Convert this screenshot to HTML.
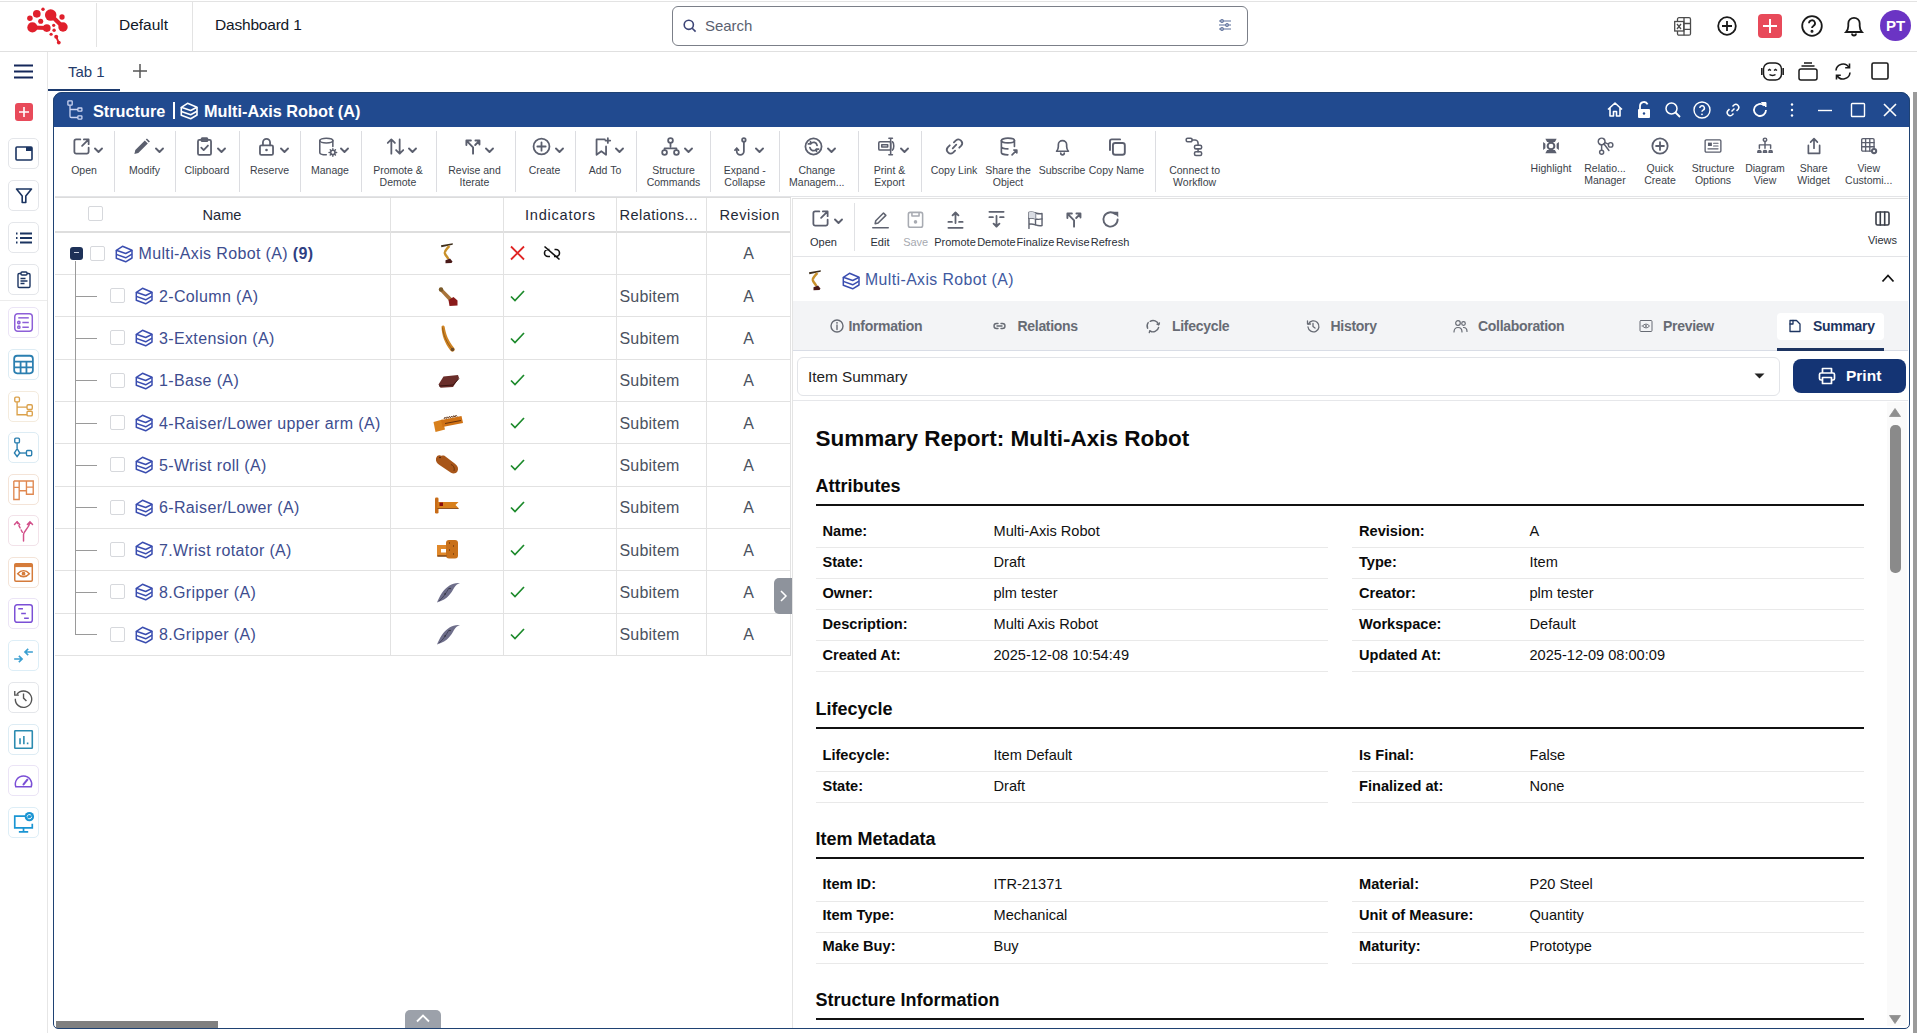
<!DOCTYPE html>
<html><head><meta charset="utf-8">
<style>
*{box-sizing:border-box}
html,body{margin:0;padding:0}
body{width:1917px;height:1033px;overflow:hidden;background:#fff;font-family:"Liberation Sans",sans-serif;position:relative;color:#1f2937}
.a{position:absolute}
.t{position:absolute;white-space:nowrap;line-height:1}
svg{position:absolute;overflow:visible}
.lb{position:absolute;white-space:nowrap;font-size:10.5px;line-height:12px;color:#3b3f4a;text-align:center;width:90px}
.sb{position:absolute;left:8px;width:31px;height:31px;border:1px solid #e6e7eb;border-radius:5px}
</style></head><body>

<div class="a" style="left:0;top:1px;width:1917px;height:1px;background:#e3e3e3"></div>
<div class="a" style="left:0;top:51px;width:1917px;height:1px;background:#e0e0e0"></div>
<div class="a" style="left:96px;top:3px;width:1px;height:44px;background:#e3e3e3"></div>
<div class="a" style="left:192px;top:2px;width:1px;height:49px;background:#e3e3e3"></div>
<svg style="left:0;top:0" width="100" height="52" viewBox="0 0 100 52">
 <g fill="#e0202c">
  <circle cx="43" cy="9.3" r="1.7"/>
  <circle cx="36.8" cy="13.8" r="3.85"/>
  <circle cx="29.9" cy="18.3" r="2.75"/>
  <circle cx="40.7" cy="21.3" r="2.55"/>
  <circle cx="32.4" cy="27.4" r="5.1"/>
  <circle cx="46.8" cy="28.1" r="3.85"/>
  <circle cx="50.7" cy="15.1" r="5.75"/>
  <circle cx="63" cy="27" r="4.7"/>
  <circle cx="62" cy="17" r="2.65"/>
  <circle cx="53.7" cy="25.3" r="1.6"/>
  <circle cx="54.1" cy="30.2" r="1.7"/>
  <circle cx="51.1" cy="34.25" r="1.6"/>
  <circle cx="56.2" cy="36.8" r="2"/>
  <circle cx="58.8" cy="42.6" r="1.9"/>
 </g>
 <g stroke="#e0202c" fill="none">
  <path d="M32.4 27.4L46.8 28.1" stroke-width="4"/>
  <path d="M50.7 15.1L63 27" stroke-width="4.2"/>
  <path d="M56.2 36.8L58.8 42.6" stroke-width="1.9"/>
 </g>
</svg>
<div class="t" style="left:119px;top:17px;font-size:15.5px;color:#111827">Default</div>
<div class="t" style="left:215px;top:17px;font-size:15.5px;color:#111827;letter-spacing:-0.2px">Dashboard 1</div>
<div class="a" style="left:672px;top:6px;width:576px;height:40px;border:1px solid #7b7f88;border-radius:6px"></div>
<svg style="left:683px;top:19px" width="14" height="14" viewBox="0 0 14 14"><circle cx="5.8" cy="5.8" r="4.6" fill="none" stroke="#3d4577" stroke-width="1.6"/><path d="M9.2 9.2 L12.6 12.6" stroke="#3d4577" stroke-width="1.6"/></svg>
<div class="t" style="left:705px;top:18px;font-size:15px;color:#5b6170;letter-spacing:-0.05px">Search</div>
<svg style="left:1218px;top:18px" width="14" height="14" viewBox="0 0 14 14" fill="none" stroke="#5b6e9a" stroke-width="1.2"><path d="M1 3h12M1 7h12M1 11h12"/><circle cx="4" cy="3" r="1.3" fill="#fff"/><circle cx="9" cy="7" r="1.3" fill="#fff"/><circle cx="4" cy="11" r="1.3" fill="#fff"/></svg>
<svg style="left:1674px;top:17px" width="18" height="19" viewBox="0 0 18 19" fill="none" stroke="#4b4b4b" stroke-width="1.3"><rect x="3.5" y="0.7" width="13" height="17.5" rx="1.5"/><path d="M10 0.7v17.5M10 6.5h6.5M10 12.3h6.5"/><rect x="0.7" y="4.5" width="9" height="9.5" fill="#fff"/><path d="M3 7l4 5M7 7l-4 5"/></svg>
<svg style="left:1717px;top:16px" width="20" height="20" viewBox="0 0 20 20" fill="none" stroke="#1a1a1a" stroke-width="1.8"><circle cx="10" cy="10" r="8.8"/><path d="M10 5v10M5 10h10"/></svg>
<div class="a" style="left:1758px;top:14px;width:24px;height:24px;background:#e84a5a;border-radius:4px"></div>
<svg style="left:1758px;top:14px" width="24" height="24" viewBox="0 0 24 24" stroke="#fff" stroke-width="2"><path d="M12 5v14M5 12h14"/></svg>
<svg style="left:1801px;top:15px" width="22" height="22" viewBox="0 0 22 22" fill="none" stroke="#1a1a1a" stroke-width="1.8"><circle cx="11" cy="11" r="9.8"/><path d="M8 8.3a3 3 0 1 1 4.4 2.6c-1 .6-1.4 1.1-1.4 2.2"/><circle cx="11" cy="16.3" r="0.6" fill="#1a1a1a"/></svg>
<svg style="left:1843px;top:14px" width="22" height="24" viewBox="0 0 22 24" fill="none" stroke="#1a1a1a" stroke-width="1.8"><path d="M3 18h16c-1.5-1.6-2.3-3.6-2.3-6V9.5a5.7 5.7 0 0 0-11.4 0V12c0 2.4-.8 4.4-2.3 6z"/><path d="M9 19.5a2 2 0 0 0 4 0"/></svg>
<div class="a" style="left:1880px;top:10px;width:31px;height:31px;border-radius:50%;background:#6b34c4"></div>
<div class="t" style="left:1880px;top:18px;width:31px;text-align:center;font-size:15px;font-weight:bold;color:#fff">PT</div>

<div class="a" style="left:47px;top:52px;width:1px;height:981px;background:#e6e6e6"></div>
<svg style="left:14px;top:64px" width="19" height="15" viewBox="0 0 19 15" stroke="#14275a" stroke-width="2.2"><path d="M0 1.5h19M0 7.5h19M0 13.5h19"/></svg>
<div class="t" style="left:68px;top:64px;font-size:15px;color:#243b6b">Tab 1</div>
<div class="a" style="left:48px;top:89px;width:72px;height:2px;background:#1c3a6e"></div>
<svg style="left:132px;top:63px" width="16" height="16" viewBox="0 0 16 16" stroke="#555" stroke-width="1.5"><path d="M8 1v14M1 8h14"/></svg>
<svg style="left:1761px;top:62px" width="23" height="19" viewBox="0 0 23 19" fill="none" stroke="#1a1a1a" stroke-width="1.5"><rect x="2.5" y="1" width="18" height="17" rx="6"/><path d="M0.8 6v7M22.2 6v7"/><path d="M7 8.5l1.5-1 1.5 1M13 8.5l1.5-1 1.5 1M8.5 12.5c1.5 1.3 4.5 1.3 6 0"/></svg>
<svg style="left:1798px;top:62px" width="20" height="19" viewBox="0 0 20 19" fill="none" stroke="#1a1a1a" stroke-width="1.5"><rect x="1" y="7" width="18" height="11" rx="2"/><path d="M3.5 4h13M6 1h8"/></svg>
<svg style="left:1834px;top:63px" width="18" height="17" viewBox="0 0 18 17" fill="none" stroke="#1a1a1a" stroke-width="1.6"><path d="M2 7.5a7 7 0 0 1 13-3M16 9.5a7 7 0 0 1-13 3"/><path d="M15.5 0.5v4.3h-4.3M2.5 16.5v-4.3h4.3"/></svg>
<svg style="left:1871px;top:62px" width="18" height="18" viewBox="0 0 18 18" fill="none" stroke="#1a1a1a" stroke-width="1.6"><rect x="1" y="1" width="16" height="16" rx="1.5"/></svg>
<div class="a" style="left:15px;top:103px;width:18px;height:18px;background:#e84a5a;border-radius:3px"></div><svg style="left:15px;top:103px" width="18" height="18" viewBox="0 0 18 18" stroke="#fff" stroke-width="1.6"><path d="M9 4v10M4 9h10"/></svg><div class="a" style="left:0;top:300px;width:47px;height:1px;background:#ececec"></div><div class="sb" style="top:138px;border-color:#e4e6ea"></div><svg style="left:14.50px;top:144.50px" width="18.00" height="18.00" viewBox="0 0 18 18"><g fill="none" stroke="#1b3461" stroke-width="1.6"><rect x="1" y="2" width="16" height="13" rx="1"/></g><rect x="11" y="2" width="6" height="4" fill="#1b3461"/></svg><div class="sb" style="top:180px;border-color:#e4e6ea"></div><svg style="left:14.50px;top:186.50px" width="18.00" height="18.00" viewBox="0 0 18 18"><path d="M1.5 2h15l-5.7 7v6.5h-3.6V9z" fill="none" stroke="#1b3461" stroke-width="1.6" stroke-linejoin="round"/></svg><div class="sb" style="top:222px;border-color:#e4e6ea"></div><svg style="left:14.50px;top:228.50px" width="18.00" height="18.00" viewBox="0 0 18 18"><g stroke="#1b3461" stroke-width="1.8"><path d="M5 4.5h12M5 9h12M5 13.5h12"/><path d="M1 4.5h1.5M1 9h1.5M1 13.5h1.5"/></g></svg><div class="sb" style="top:264px;border-color:#e4e6ea"></div><svg style="left:14.50px;top:270.50px" width="18.00" height="18.00" viewBox="0 0 18 18"><g fill="none" stroke="#1b3461" stroke-width="1.4"><rect x="3" y="2.5" width="12" height="14" rx="1.2"/><rect x="6" y="1" width="6" height="3" rx="1" fill="#fff"/><path d="M5.5 7.5h5M5.5 10h7M5.5 12.5h4"/></g></svg><div class="sb" style="top:307px;border-color:#ebe4f6"></div><svg style="left:12.97px;top:311.97px" width="21.06" height="21.06" viewBox="0 0 18 18"><g fill="none" stroke="#8d5fd8" stroke-width="1.26"><rect x="1.5" y="1.5" width="15" height="15" rx="2.5"/><path d="M4.5 5h9"/><circle cx="5" cy="9" r="1"/><circle cx="5" cy="13" r="1"/><path d="M8 9h5.5M8 13h5.5"/></g></svg><div class="sb" style="top:349px;border-color:#ddecf4"></div><svg style="left:12.97px;top:353.97px" width="21.06" height="21.06" viewBox="0 0 18 18"><g fill="none" stroke="#2b7fb0" stroke-width="1.53"><rect x="1" y="1.5" width="16" height="15" rx="2.5"/><path d="M1 6.5h16M1 11.5h16M6.5 6.5v10M11.5 6.5v10"/></g></svg><div class="sb" style="top:391px;border-color:#f4ebdd"></div><svg style="left:12.97px;top:395.97px" width="21.06" height="21.06" viewBox="0 0 18 18"><g fill="none" stroke="#dba14a" stroke-width="1.17"><rect x="1.5" y="1" width="4" height="4" rx="1"/><rect x="12" y="7.5" width="4.5" height="4" rx="1"/><rect x="12" y="13" width="4.5" height="4" rx="1"/><path d="M3.5 5v11h8.5M3.5 9.5h8.5"/></g></svg><div class="sb" style="top:432px;border-color:#ddecf4"></div><svg style="left:12.97px;top:436.97px" width="21.06" height="21.06" viewBox="0 0 18 18"><g fill="none" stroke="#2b7fb0" stroke-width="1.17"><rect x="1.5" y="1" width="4" height="4" rx="1"/><rect x="11.5" y="11.5" width="4.5" height="4.5" rx="1"/><path d="M3.5 5v4.5"/><path d="M3.5 10l2.3 3.7-2.3 3-2.3-3z"/><path d="M5.8 13.7h5.7"/></g></svg><div class="sb" style="top:474px;border-color:#f4e4d8"></div><svg style="left:12.97px;top:478.97px" width="21.06" height="21.06" viewBox="0 0 18 18"><g fill="none" stroke="#e08850" stroke-width="1.17"><path d="M0.7 1.7h16.6v11.3h-5.8V1.7M5.3 1.7v15.8H0.7V1.7M0.7 7.2h4.6M5.3 10h6.2M11.5 7h5.8"/></g></svg><div class="sb" style="top:515px;border-color:#f2e2e9"></div><svg style="left:12.97px;top:519.97px" width="21.06" height="21.06" viewBox="0 0 18 18"><g fill="none" stroke="#d2508a" stroke-width="1.26" stroke-linecap="round"><path d="M9 18v-5.5c0-3 4.5-5 5.5-10.5M12.3 3.8l2.2-2.3 2.2 2.3M1.3 3.8l2.2-2.3 2.2 2.3"/><path d="M8 10.5L3.5 1.8" stroke-dasharray="2.2 2"/></g></svg><div class="sb" style="top:557px;border-color:#f4e4d8"></div><svg style="left:12.97px;top:561.97px" width="21.06" height="21.06" viewBox="0 0 18 18"><g fill="none" stroke="#d57b3a" stroke-width="1.26"><rect x="1.5" y="1.5" width="15" height="15" rx="1"/><path d="M1.5 3h15" stroke-width="2.69"/><path d="M4 10c3-3.5 7-3.5 10 0c-3 3.5-7 3.5-10 0z"/><circle cx="9" cy="10" r="1" fill="#d57b3a"/></g></svg><div class="sb" style="top:598px;border-color:#ebe4f6"></div><svg style="left:12.97px;top:602.97px" width="21.06" height="21.06" viewBox="0 0 18 18"><g fill="none" stroke="#7b4fd6" stroke-width="1.26"><rect x="1.5" y="1.5" width="15" height="15" rx="2"/><path d="M4.5 5h4M7 9h4M9.5 13h4"/></g></svg><div class="sb" style="top:640px;border-color:#ddeef7"></div><svg style="left:12.97px;top:644.97px" width="21.06" height="21.06" viewBox="0 0 18 18"><g fill="none" stroke="#3a9fd1" stroke-width="1.35"><path d="M1 12h6.5M5 9.3L7.8 12 5 14.7"/><path d="M17 6h-6.5M13 3.3L10.2 6 13 8.7"/></g></svg><div class="sb" style="top:682px;border-color:#e4e6ea"></div><svg style="left:12.97px;top:686.97px" width="21.06" height="21.06" viewBox="0 0 18 18"><g fill="none" stroke="#555" stroke-width="1.17"><path d="M3.2 6.5A7 7 0 1 1 2 10"/><path d="M1.5 3.5v3.5h3.5"/><path d="M9 5.5v4l2.5 2.5"/></g></svg><div class="sb" style="top:724px;border-color:#ddecf4"></div><svg style="left:12.97px;top:728.97px" width="21.06" height="21.06" viewBox="0 0 18 18"><g fill="none" stroke="#2b8bb0" stroke-width="1.35"><rect x="1.5" y="1.5" width="15" height="15" rx="0.5"/><path d="M6 13V8M9.3 13V6M12.5 13v-1.5"/></g></svg><div class="sb" style="top:765px;border-color:#ebe4f6"></div><svg style="left:12.97px;top:769.97px" width="21.06" height="21.06" viewBox="0 0 18 18"><g fill="none" stroke="#7b4fd6" stroke-width="1.26"><path d="M2.4 14.4A7 7 0 1 1 15.6 14.4Z"/><path d="M9 12.3l3.3-4" stroke-width="1.79" stroke-linecap="round"/></g></svg><div class="sb" style="top:807px;border-color:#ddeef7"></div><svg style="left:12.97px;top:811.97px" width="21.06" height="21.06" viewBox="0 0 18 18"><g fill="none" stroke="#1a95d3" stroke-width="1.44"><path d="M10.5 3.5H1.5v10h15V10"/><path d="M9 13.5v3M5 17h8"/></g><circle cx="14" cy="4" r="4" fill="#1a95d3"/><path d="M12 4a2 2 0 0 1 3.6-1M16 4a2 2 0 0 1-3.6 1" stroke="#fff" stroke-width="0.81" fill="none"/></svg><div class="a" style="left:53px;top:92px;width:1857px;height:937px;border:1.5px solid #1f4273;border-radius:9px 9px 5px 5px;z-index:5;pointer-events:none"></div><div class="a" style="left:53px;top:92px;width:1857px;height:35px;background:#214a8f;border-radius:9px 9px 0 0"></div><svg style="left:67px;top:100px" width="16" height="20" viewBox="0 0 16 20" fill="none" stroke="#cdd5f2" stroke-width="1.3"><rect x="0.9" y="0.9" width="4.3" height="4.3" rx="0.6"/><rect x="10.9" y="8" width="4" height="3.2" rx="0.5"/><rect x="10.9" y="15.8" width="4" height="3.3" rx="0.5"/><path d="M3 5.2v11c0 .8.5 1.3 1.3 1.3h6.6M3 9.5h7.9"/></svg><div class="t" style="left:93px;top:103px;font-size:16.3px;font-weight:bold;color:#fff">Structure</div><div class="a" style="left:172.5px;top:102px;width:2px;height:17px;background:#fff"></div><svg style="left:180px;top:102px" width="18" height="17" viewBox="0 0 18 17" fill="none" stroke="#fff" stroke-width="1.6" stroke-linejoin="round"><path d="M7.5 1.3L17 5.3 10.7 8.5 1.3 5.3z"/><path d="M1.3 5.3V13.3L10.7 16.8 17 13V5.3"/><path d="M1.3 9.4L10.7 12.8 17 9.2"/></svg><div class="t" style="left:204px;top:103px;font-size:16.3px;font-weight:bold;color:#fff">Multi-Axis Robot (A)</div><svg style="left:1606px;top:101px" width="18" height="18" viewBox="0 0 18 18"><path d="M2 8.5L9 2l7 6.5M4 7v8h3.5v-4.5h3V15H14V7" fill="none" stroke="#fff" stroke-width="1.6" stroke-linejoin="round"/></svg><svg style="left:1635px;top:101px" width="18" height="18" viewBox="0 0 18 18"><path d="M5 8V5a4 4 0 0 1 7.6-1.7" fill="none" stroke="#fff" stroke-width="1.8"/><rect x="3" y="8" width="12" height="9" rx="1" fill="#fff"/><circle cx="9" cy="12.5" r="1.2" fill="#214a8f"/></svg><svg style="left:1664px;top:101px" width="18" height="18" viewBox="0 0 18 18"><circle cx="7.5" cy="7.5" r="5.5" fill="none" stroke="#fff" stroke-width="1.5"/><path d="M11.5 11.5L16 16" stroke="#fff" stroke-width="1.8"/></svg><svg style="left:1693px;top:101px" width="18" height="18" viewBox="0 0 18 18"><circle cx="9" cy="9" r="8" fill="none" stroke="#fff" stroke-width="1.4"/><path d="M6.8 7a2.3 2.3 0 1 1 3.3 2.1c-.8.4-1.1.9-1.1 1.7" fill="none" stroke="#fff" stroke-width="1.5"/><circle cx="9" cy="13.3" r="0.9" fill="#fff"/></svg><svg style="left:1724px;top:101px" width="18" height="18" viewBox="0 0 18 18"><g fill="none" stroke="#fff" stroke-width="1.5"><path d="M7.5 10.5l3-3"/><path d="M8.5 5.5l1.5-1.5a3 3 0 0 1 4.2 4.2l-1.7 1.7"/><path d="M9.5 12.5L8 14a3 3 0 0 1-4.2-4.2l1.7-1.7"/></g></svg><svg style="left:1751px;top:101px" width="18" height="18" viewBox="0 0 18 18"><path d="M15 9a6 6 0 1 1-2-4.5" fill="none" stroke="#fff" stroke-width="1.8"/><path d="M10.5 1.5h4.5v4.5z" fill="#fff" stroke="#fff" stroke-width="1"/></svg><svg style="left:1783px;top:101px" width="18" height="18" viewBox="0 0 18 18"><circle cx="9" cy="3.5" r="1.2" fill="#fff"/><circle cx="9" cy="9" r="1.2" fill="#fff"/><circle cx="9" cy="14.5" r="1.2" fill="#fff"/></svg><svg style="left:1816px;top:101px" width="18" height="18" viewBox="0 0 18 18"><path d="M2 9.5h14" stroke="#fff" stroke-width="1.4"/></svg><svg style="left:1849px;top:101px" width="18" height="18" viewBox="0 0 18 18"><rect x="2.5" y="2.5" width="13" height="13" rx="0.8" fill="none" stroke="#fff" stroke-width="1.4"/></svg><svg style="left:1881px;top:101px" width="18" height="18" viewBox="0 0 18 18"><path d="M3 3l12 12M15 3L3 15" stroke="#fff" stroke-width="1.6"/></svg><svg style="left:71.6px;top:137px" width="19" height="19" viewBox="0 0 16 16"><g fill="none" stroke="#5b5f6e" stroke-width="1.5" stroke-linecap="round" stroke-linejoin="round"><path d="M7 2H3.5A1.5 1.5 0 0 0 2 3.5v9A1.5 1.5 0 0 0 3.5 14h9a1.5 1.5 0 0 0 1.5-1.5V9"/><path d="M10 2h4v4M14 2L8.5 7.5"/></g></svg><svg style="left:94.0px;top:146.5px" width="9" height="7" viewBox="0 0 9 7"><path d="M1 1.5l3.5 3.5 3.5-3.5" fill="none" stroke="#5b5f6e" stroke-width="1.9" stroke-linecap="round" stroke-linejoin="round"/></svg><div class="lb" style="left:39px;top:164px">Open</div><svg style="left:132.1px;top:137px" width="19" height="19" viewBox="0 0 16 16"><path d="M2 14.3l.8-3.3 8-8 2.5 2.5-8 8z" fill="#5b5f6e"/><path d="M11.6 2.2l1-1 2.5 2.5-1 1z" fill="#5b5f6e"/></svg><svg style="left:154.5px;top:146.5px" width="9" height="7" viewBox="0 0 9 7"><path d="M1 1.5l3.5 3.5 3.5-3.5" fill="none" stroke="#5b5f6e" stroke-width="1.9" stroke-linecap="round" stroke-linejoin="round"/></svg><div class="lb" style="left:99.5px;top:164px">Modify</div><svg style="left:194.6px;top:137px" width="19" height="19" viewBox="0 0 16 16"><g fill="none" stroke="#5b5f6e" stroke-width="1.5" stroke-linecap="round" stroke-linejoin="round"><rect x="2.5" y="2.5" width="11" height="12.5" rx="1.2"/><rect x="5.5" y="1" width="5" height="2.5" rx="0.6"/><path d="M5.3 9l2 2 3.6-3.8"/></g></svg><svg style="left:217.0px;top:146.5px" width="9" height="7" viewBox="0 0 9 7"><path d="M1 1.5l3.5 3.5 3.5-3.5" fill="none" stroke="#5b5f6e" stroke-width="1.9" stroke-linecap="round" stroke-linejoin="round"/></svg><div class="lb" style="left:162px;top:164px">Clipboard</div><svg style="left:257.1px;top:137px" width="19" height="19" viewBox="0 0 16 16"><g fill="none" stroke="#5b5f6e" stroke-width="1.5" stroke-linecap="round" stroke-linejoin="round"><rect x="2.5" y="7" width="11" height="8" rx="1.2"/><path d="M5 7V4.5a3 3 0 0 1 6 0V7"/></g><circle cx="8" cy="11" r="1.1" fill="#5b5f6e"/></svg><svg style="left:279.5px;top:146.5px" width="9" height="7" viewBox="0 0 9 7"><path d="M1 1.5l3.5 3.5 3.5-3.5" fill="none" stroke="#5b5f6e" stroke-width="1.9" stroke-linecap="round" stroke-linejoin="round"/></svg><div class="lb" style="left:224.5px;top:164px">Reserve</div><svg style="left:317.6px;top:137px" width="19" height="19" viewBox="0 0 16 16"><g fill="none" stroke="#5b5f6e" stroke-width="1.3" stroke-linecap="round" stroke-linejoin="round"><ellipse cx="7" cy="3" rx="5.5" ry="2"/><path d="M1.5 3v10c0 1.1 2.5 2 5.5 2M12.5 3v5"/></g><g fill="none" stroke="#5b5f6e" stroke-width="1.2" stroke-linecap="round" stroke-linejoin="round"><circle cx="12.5" cy="13" r="1.8"/><path d="M12.5 9.8v1.2M12.5 15v1.2M9.3 13h1.2M14.5 13h1.2M10.3 10.8l.8.8M13.9 14.4l.8.8M10.3 15.2l.8-.8M13.9 11.6l.8-.8"/></g></svg><svg style="left:340.0px;top:146.5px" width="9" height="7" viewBox="0 0 9 7"><path d="M1 1.5l3.5 3.5 3.5-3.5" fill="none" stroke="#5b5f6e" stroke-width="1.9" stroke-linecap="round" stroke-linejoin="round"/></svg><div class="lb" style="left:285px;top:164px">Manage</div><svg style="left:385.6px;top:137px" width="19" height="19" viewBox="0 0 16 16"><g fill="none" stroke="#5b5f6e" stroke-width="1.5" stroke-linecap="round" stroke-linejoin="round"><path d="M4.5 14V2M1.5 5l3-3 3 3"/><path d="M11.5 2v12M8.5 11l3 3 3-3"/></g></svg><svg style="left:408.0px;top:146.5px" width="9" height="7" viewBox="0 0 9 7"><path d="M1 1.5l3.5 3.5 3.5-3.5" fill="none" stroke="#5b5f6e" stroke-width="1.9" stroke-linecap="round" stroke-linejoin="round"/></svg><div class="lb" style="left:353px;top:164px">Promote &<br>Demote</div><svg style="left:462.1px;top:137px" width="19" height="19" viewBox="0 0 16 16"><g fill="none" stroke="#5b5f6e" stroke-width="1.6" stroke-linecap="round" stroke-linejoin="round"><path d="M9.3 14V8.7L3.9 3.2M3.7 6.7V3h3.8M11.1 6.7l3.5-3.5M11.3 3h3.4v3.3"/></g></svg><svg style="left:484.5px;top:146.5px" width="9" height="7" viewBox="0 0 9 7"><path d="M1 1.5l3.5 3.5 3.5-3.5" fill="none" stroke="#5b5f6e" stroke-width="1.9" stroke-linecap="round" stroke-linejoin="round"/></svg><div class="lb" style="left:429.5px;top:164px">Revise and<br>Iterate</div><svg style="left:532.1px;top:137px" width="19" height="19" viewBox="0 0 16 16"><g fill="none" stroke="#5b5f6e" stroke-width="1.5" stroke-linecap="round" stroke-linejoin="round"><circle cx="8" cy="8" r="6.7"/><path d="M8 4.5v7M4.5 8h7"/></g></svg><svg style="left:554.5px;top:146.5px" width="9" height="7" viewBox="0 0 9 7"><path d="M1 1.5l3.5 3.5 3.5-3.5" fill="none" stroke="#5b5f6e" stroke-width="1.9" stroke-linecap="round" stroke-linejoin="round"/></svg><div class="lb" style="left:499.5px;top:164px">Create</div><svg style="left:592.6px;top:137px" width="19" height="19" viewBox="0 0 16 16"><g fill="none" stroke="#5b5f6e" stroke-width="1.5" stroke-linecap="round" stroke-linejoin="round"><path d="M10 2H3v13l4-3 4 3V8"/><path d="M12.5 1v4M10.5 3h4"/></g></svg><svg style="left:615.0px;top:146.5px" width="9" height="7" viewBox="0 0 9 7"><path d="M1 1.5l3.5 3.5 3.5-3.5" fill="none" stroke="#5b5f6e" stroke-width="1.9" stroke-linecap="round" stroke-linejoin="round"/></svg><div class="lb" style="left:560px;top:164px">Add To</div><svg style="left:661.1px;top:137px" width="19" height="19" viewBox="0 0 16 16"><g fill="none" stroke="#5b5f6e" stroke-width="1.5" stroke-linecap="round" stroke-linejoin="round"><circle cx="8" cy="3" r="2"/><circle cx="3" cy="13" r="2"/><circle cx="13" cy="13" r="2"/><path d="M8 5v3M3 11V9.5h10V11"/></g></svg><svg style="left:683.5px;top:146.5px" width="9" height="7" viewBox="0 0 9 7"><path d="M1 1.5l3.5 3.5 3.5-3.5" fill="none" stroke="#5b5f6e" stroke-width="1.9" stroke-linecap="round" stroke-linejoin="round"/></svg><div class="lb" style="left:628.5px;top:164px">Structure<br>Commands</div><svg style="left:732.4px;top:137px" width="19" height="19" viewBox="0 0 16 16"><g fill="none" stroke="#5b5f6e" stroke-width="1.5" stroke-linecap="round" stroke-linejoin="round"><circle cx="10" cy="2.5" r="1.5"/><path d="M10 4v8a3 3 0 0 1-6 0V9.5"/><path d="M2.5 11L4 9.5 5.5 11"/></g></svg><svg style="left:754.8px;top:146.5px" width="9" height="7" viewBox="0 0 9 7"><path d="M1 1.5l3.5 3.5 3.5-3.5" fill="none" stroke="#5b5f6e" stroke-width="1.9" stroke-linecap="round" stroke-linejoin="round"/></svg><div class="lb" style="left:699.8px;top:164px">Expand -<br>Collapse</div><svg style="left:804.4px;top:137px" width="19" height="19" viewBox="0 0 16 16"><g fill="none" stroke="#5b5f6e" stroke-width="1.5" stroke-linecap="round" stroke-linejoin="round"><circle cx="8" cy="8" r="6.8"/><path d="M5 9a3 3 0 0 0 5.2 1.5M11 7a3 3 0 0 0-5.2-1.5"/><path d="M10.5 12v-1.8h1.8M5.5 4v1.8H3.7"/></g></svg><svg style="left:826.8px;top:146.5px" width="9" height="7" viewBox="0 0 9 7"><path d="M1 1.5l3.5 3.5 3.5-3.5" fill="none" stroke="#5b5f6e" stroke-width="1.9" stroke-linecap="round" stroke-linejoin="round"/></svg><div class="lb" style="left:771.8px;top:164px">Change<br>Managem...</div><svg style="left:877.1px;top:137px" width="19" height="19" viewBox="0 0 16 16"><g fill="none" stroke="#5b5f6e" stroke-width="1.3" stroke-linecap="round" stroke-linejoin="round"><rect x="1.5" y="4" width="10" height="7" rx="1"/><path d="M4 6.5h5v2H4z"/><path d="M10 1h3M11.5 1v14M10 15h3M13 4c1.5 1 1.5 6 0 7"/></g></svg><svg style="left:899.5px;top:146.5px" width="9" height="7" viewBox="0 0 9 7"><path d="M1 1.5l3.5 3.5 3.5-3.5" fill="none" stroke="#5b5f6e" stroke-width="1.9" stroke-linecap="round" stroke-linejoin="round"/></svg><div class="lb" style="left:844.5px;top:164px">Print &<br>Export</div><svg style="left:944.5px;top:137px" width="19" height="19" viewBox="0 0 16 16"><g fill="none" stroke="#5b5f6e" stroke-width="1.5" stroke-linecap="round" stroke-linejoin="round"><path d="M6.5 9.5l3-3"/><path d="M7.5 4.5l1.7-1.7a3.2 3.2 0 0 1 4.5 4.5L12 9"/><path d="M8.5 11.5l-1.7 1.7a3.2 3.2 0 0 1-4.5-4.5L4 7"/></g></svg><div class="lb" style="left:909px;top:164px">Copy Link</div><svg style="left:998.5px;top:137px" width="19" height="19" viewBox="0 0 16 16"><g fill="none" stroke="#5b5f6e" stroke-width="1.4" stroke-linecap="round" stroke-linejoin="round"><ellipse cx="7.5" cy="3" rx="5.5" ry="2"/><path d="M2 3v10c0 1.1 2.5 2 5.5 2M13 3v5M2 8c0 1.1 2.5 2 5.5 2"/><path d="M11 15l4-4M12.5 11H15v2.5"/></g></svg><div class="lb" style="left:963px;top:164px">Share the<br>Object</div><svg style="left:1052.5px;top:137px" width="19" height="19" viewBox="0 0 16 16"><g fill="none" stroke="#5b5f6e" stroke-width="1.4" stroke-linecap="round" stroke-linejoin="round"><path d="M3 12h10c-1-1-1.5-2.3-1.5-4V6.5a3.5 3.5 0 0 0-7 0V8c0 1.7-.5 3-1.5 4z"/><path d="M6.5 13.5a1.5 1.5 0 0 0 3 0"/></g></svg><div class="lb" style="left:1017px;top:164px">Subscribe</div><svg style="left:1107.0px;top:137px" width="19" height="19" viewBox="0 0 16 16"><g fill="none" stroke="#5b5f6e" stroke-width="1.6" stroke-linecap="round" stroke-linejoin="round"><rect x="5" y="5" width="10" height="10" rx="2"/><path d="M2.5 11V3.5a1.5 1.5 0 0 1 1.5-1.5H11"/></g></svg><div class="lb" style="left:1071.5px;top:164px">Copy Name</div><svg style="left:1185.1px;top:137px" width="19" height="19" viewBox="0 0 16 16"><g fill="none" stroke="#5b5f6e" stroke-width="1.3" stroke-linecap="round" stroke-linejoin="round"><rect x="1" y="1" width="5" height="3" rx="1.2"/><rect x="8" y="7" width="6" height="3" rx="1.2"/><rect x="8" y="12.5" width="6" height="3" rx="1.2"/><path d="M6 2.5h2.5c1 0 2.5 1 2.5 2.5v2M11 10v2.5"/></g></svg><div class="lb" style="left:1149.6px;top:164px">Connect to<br>Workflow</div><div class="a" style="left:114px;top:131px;width:1px;height:61px;background:#dcdde1"></div><div class="a" style="left:175px;top:131px;width:1px;height:61px;background:#dcdde1"></div><div class="a" style="left:239px;top:131px;width:1px;height:61px;background:#dcdde1"></div><div class="a" style="left:300px;top:131px;width:1px;height:61px;background:#dcdde1"></div><div class="a" style="left:361px;top:131px;width:1px;height:61px;background:#dcdde1"></div><div class="a" style="left:435.5px;top:131px;width:1px;height:61px;background:#dcdde1"></div><div class="a" style="left:514.5px;top:131px;width:1px;height:61px;background:#dcdde1"></div><div class="a" style="left:575px;top:131px;width:1px;height:61px;background:#dcdde1"></div><div class="a" style="left:636px;top:131px;width:1px;height:61px;background:#dcdde1"></div><div class="a" style="left:710px;top:131px;width:1px;height:61px;background:#dcdde1"></div><div class="a" style="left:779px;top:131px;width:1px;height:61px;background:#dcdde1"></div><div class="a" style="left:857.5px;top:131px;width:1px;height:61px;background:#dcdde1"></div><div class="a" style="left:920.5px;top:131px;width:1px;height:61px;background:#dcdde1"></div><div class="a" style="left:1155px;top:131px;width:1px;height:61px;background:#dcdde1"></div><svg style="left:1542px;top:137px" width="18" height="18" viewBox="0 0 16 16"><g fill="#5b5f6e"><path d="M3 1.5h10l-1.5 3h-7z"/><path d="M3 14.5h10l-1.5-3h-7z"/><path d="M1 4.5v7l2-1.5v-4z"/><path d="M15 4.5v7l-2-1.5v-4z"/></g><g fill="none" stroke="#5b5f6e" stroke-width="1.8" stroke-linecap="round" stroke-linejoin="round"><circle cx="8" cy="8" r="3"/></g></svg><div class="lb" style="left:1506px;top:162px">Highlight</div><svg style="left:1596px;top:137px" width="18" height="18" viewBox="0 0 16 16"><g fill="none" stroke="#5b5f6e" stroke-width="1.3" stroke-linecap="round" stroke-linejoin="round"><circle cx="5" cy="4" r="3"/><circle cx="13" cy="7" r="2"/><circle cx="5" cy="13.5" r="1.8"/><path d="M8 5l3 1.3M5 7v4.7M7 6l4.5 6"/></g></svg><div class="lb" style="left:1560px;top:162px">Relatio...<br>Manager</div><svg style="left:1651px;top:137px" width="18" height="18" viewBox="0 0 16 16"><g fill="none" stroke="#5b5f6e" stroke-width="1.6" stroke-linecap="round" stroke-linejoin="round"><circle cx="8" cy="8" r="6.8"/><path d="M8 4.5v7M4.5 8h7"/></g></svg><div class="lb" style="left:1615px;top:162px">Quick<br>Create</div><svg style="left:1704px;top:137px" width="18" height="18" viewBox="0 0 16 16"><g fill="none" stroke="#5b5f6e" stroke-width="1.2" stroke-linecap="round" stroke-linejoin="round"><rect x="1" y="2.5" width="14" height="11" rx="1"/></g><rect x="3.5" y="5" width="3.5" height="3" fill="#5b5f6e"/><g fill="none" stroke="#5b5f6e" stroke-width="1" stroke-linecap="round" stroke-linejoin="round"><path d="M8.5 5.5h4M8.5 8h4M3.5 10.5h9"/></g></svg><div class="lb" style="left:1668px;top:162px">Structure<br>Options</div><svg style="left:1756px;top:137px" width="18" height="18" viewBox="0 0 16 16"><g fill="none" stroke="#5b5f6e" stroke-width="1.3" stroke-linecap="round" stroke-linejoin="round"><circle cx="8" cy="2.5" r="1.5"/><path d="M8 4v3M3 10V7h10v3M8 7v3"/><path d="M1.5 13.5a1.5 1.5 0 0 1 3 0zM6.5 13.5a1.5 1.5 0 0 1 3 0zM11.5 13.5a1.5 1.5 0 0 1 3 0z"/></g></svg><div class="lb" style="left:1720px;top:162px">Diagram<br>View</div><svg style="left:1804.7px;top:137px" width="18" height="18" viewBox="0 0 16 16"><g fill="none" stroke="#5b5f6e" stroke-width="1.5" stroke-linecap="round" stroke-linejoin="round"><path d="M8 10V1.5M5 4.5l3-3 3 3"/><path d="M3 7.5v7h10v-7"/></g></svg><div class="lb" style="left:1768.7px;top:162px">Share<br>Widget</div><svg style="left:1859.7px;top:137px" width="18" height="18" viewBox="0 0 16 16"><g fill="none" stroke="#5b5f6e" stroke-width="1.2" stroke-linecap="round" stroke-linejoin="round"><rect x="1.5" y="1.5" width="11" height="11" rx="1"/><path d="M1.5 5h11M1.5 8.7h11M5 1.5v11M8.7 1.5v11"/></g><circle cx="12.5" cy="12.5" r="2.8" fill="#5b5f6e"/><circle cx="12.5" cy="12.5" r="1" fill="#fff"/></svg><div class="lb" style="left:1823.7px;top:162px">View<br>Customi...</div><div class="a" style="left:55px;top:195.8px;width:1853px;height:1px;background:#e3e4e7"></div><div class="a" style="left:55px;top:196.6px;width:736px;height:1.6px;background:#dcdcdc"></div><div class="a" style="left:792px;top:198px;width:1116px;height:1px;background:#e2e2e2"></div><div class="a" style="left:55px;top:231px;width:736px;height:2px;background:#dedede"></div><div class="a" style="left:390px;top:198px;width:1px;height:458px;background:#e2e2e2"></div><div class="a" style="left:503px;top:198px;width:1px;height:458px;background:#e2e2e2"></div><div class="a" style="left:616px;top:198px;width:1px;height:458px;background:#e2e2e2"></div><div class="a" style="left:706px;top:198px;width:1px;height:458px;background:#e2e2e2"></div><div class="a" style="left:790px;top:198px;width:1px;height:458px;background:#e2e2e2"></div><div class="a" style="left:792px;top:198px;width:1px;height:831px;background:#e4e4e4"></div><div class="a" style="left:88px;top:206px;width:15px;height:15px;border:1px solid #d6d8dc;border-radius:2px"></div><div class="t" style="left:172px;top:208px;width:100px;text-align:center;font-size:14.6px;color:#1f2937">Name</div><div class="t" style="left:525px;top:208px;font-size:14.6px;color:#1f2937;letter-spacing:0.75px">Indicators</div><div class="t" style="left:619.5px;top:208px;font-size:14.6px;color:#1f2937;letter-spacing:0.45px">Relations...</div><div class="t" style="left:719.5px;top:208px;font-size:14.6px;color:#1f2937;letter-spacing:0.55px">Revision</div><div class="a" style="left:55px;top:273.84px;width:736px;height:1px;background:#e2e2e2"></div><div class="a" style="left:70px;top:246.67px;width:13px;height:13px;background:#1d3158;border-radius:3px"></div><div class="a" style="left:74px;top:251.67px;width:5px;height:1.5px;background:#cfd6e6"></div><div class="a" style="left:89.5px;top:245.67px;width:15px;height:15px;border:1px solid #d6d8dc;border-radius:2px"></div><svg style="left:115px;top:244.67px" width="18" height="17" viewBox="0 0 18 17" fill="none" stroke="#3a4db0" stroke-width="1.5" stroke-linejoin="round"><path d="M7.5 1.3L17 5.3 10.7 8.5 1.3 5.3z"/><path d="M1.3 5.3V13.3L10.7 16.8 17 13V5.3"/><path d="M1.3 9.4L10.7 12.8 17 9.2"/></svg><div class="t" style="left:138.5px;top:246.17px;font-size:16px;color:#3d4d8f;letter-spacing:0.36px">Multi-Axis Robot (A) <b style="color:#2f3f82">(9)</b></div><svg style="left:430px;top:238.17px" width="36" height="30" viewBox="0 0 36 30"><path d="M11 7.3L22.8 5.2 22.7 6.8 11.4 9.2z" fill="#3e2e1c"/><path d="M19.3 8c-1.8 2.5-4.8 4.5-4.5 7 .4 2.5 2.7 3.5 3.4 6" stroke="#c8902a" stroke-width="2.4" fill="none"/><path d="M15.5 22.3l4.5-1.8 2.5 3-1 1.5-6 .3z" fill="#4a1a18"/></svg><svg style="left:510px;top:246.17px" width="15" height="14" viewBox="0 0 15 14"><path d="M1 0.5l13 13M14 0.5l-13 13" stroke="#e02424" stroke-width="1.8"/></svg><svg style="left:543px;top:245.17px" width="18" height="16" viewBox="0 0 18 16" fill="none" stroke="#111" stroke-width="1.6"><path d="M6.5 4.5H5a3.5 3.5 0 0 0 0 7h2M11.5 4.5H13a3.5 3.5 0 0 1 0 7h-2M1.5 1.5l15 13"/></svg><div class="t" style="left:706px;top:246.17px;width:85px;text-align:center;font-size:16px;color:#4b5260">A</div><div class="a" style="left:55px;top:316.18px;width:736px;height:1px;background:#e2e2e2"></div><div class="a" style="left:75px;top:295.51px;width:22px;height:1px;background:#9a9a9a"></div><div class="a" style="left:109.5px;top:288.01px;width:15px;height:15px;border:1px solid #d6d8dc;border-radius:2px"></div><svg style="left:135px;top:287.01px" width="18" height="17" viewBox="0 0 18 17" fill="none" stroke="#3a4db0" stroke-width="1.5" stroke-linejoin="round"><path d="M7.5 1.3L17 5.3 10.7 8.5 1.3 5.3z"/><path d="M1.3 5.3V13.3L10.7 16.8 17 13V5.3"/><path d="M1.3 9.4L10.7 12.8 17 9.2"/></svg><div class="t" style="left:159px;top:288.51px;font-size:16px;color:#3d4d8f;letter-spacing:0.36px">2-Column (A)</div><svg style="left:430px;top:280.51px" width="36" height="30" viewBox="0 0 36 30"><path d="M9.5 9.5c-.8-1.6.6-3.2 2.2-2.6l11 11-3 2.5z" fill="#a8743a"/><circle cx="11" cy="8.5" r="2.2" fill="#7a5a2a"/><path d="M18.5 19l5-3 4 3.5v5l-8 .5z" fill="#8a1a1a"/></svg><svg style="left:510px;top:289.51px" width="15" height="12" viewBox="0 0 15 12"><path d="M1 6.5l4 4 9-9.5" fill="none" stroke="#1c8a2b" stroke-width="1.7"/></svg><div class="t" style="left:619.5px;top:288.51px;font-size:16px;color:#4b5260;letter-spacing:0.2px">Subitem</div><div class="t" style="left:706px;top:288.51px;width:85px;text-align:center;font-size:16px;color:#4b5260">A</div><div class="a" style="left:55px;top:358.52px;width:736px;height:1px;background:#e2e2e2"></div><div class="a" style="left:75px;top:337.85px;width:22px;height:1px;background:#9a9a9a"></div><div class="a" style="left:109.5px;top:330.35px;width:15px;height:15px;border:1px solid #d6d8dc;border-radius:2px"></div><svg style="left:135px;top:329.35px" width="18" height="17" viewBox="0 0 18 17" fill="none" stroke="#3a4db0" stroke-width="1.5" stroke-linejoin="round"><path d="M7.5 1.3L17 5.3 10.7 8.5 1.3 5.3z"/><path d="M1.3 5.3V13.3L10.7 16.8 17 13V5.3"/><path d="M1.3 9.4L10.7 12.8 17 9.2"/></svg><div class="t" style="left:159px;top:330.85px;font-size:16px;color:#3d4d8f;letter-spacing:0.36px">3-Extension (A)</div><svg style="left:430px;top:322.85px" width="36" height="30" viewBox="0 0 36 30"><path d="M11.5 3.5c1-1.5 2.8-1 3.2.5.8 6 3.5 14 9.5 21 1 1.3.5 3-1 3.5-1.3.4-2.3-.2-3-1.2-5.5-7.5-8.5-15-8.7-23.8z" fill="#cf8424"/><path d="M12.5 4.5c.8 7 3.8 15 10 22" stroke="#8a5010" stroke-width="0.8" fill="none"/><circle cx="22.5" cy="26.5" r="1.8" fill="#6a4a2a"/></svg><svg style="left:510px;top:331.85px" width="15" height="12" viewBox="0 0 15 12"><path d="M1 6.5l4 4 9-9.5" fill="none" stroke="#1c8a2b" stroke-width="1.7"/></svg><div class="t" style="left:619.5px;top:330.85px;font-size:16px;color:#4b5260;letter-spacing:0.2px">Subitem</div><div class="t" style="left:706px;top:330.85px;width:85px;text-align:center;font-size:16px;color:#4b5260">A</div><div class="a" style="left:55px;top:400.86px;width:736px;height:1px;background:#e2e2e2"></div><div class="a" style="left:75px;top:380.19px;width:22px;height:1px;background:#9a9a9a"></div><div class="a" style="left:109.5px;top:372.69px;width:15px;height:15px;border:1px solid #d6d8dc;border-radius:2px"></div><svg style="left:135px;top:371.69px" width="18" height="17" viewBox="0 0 18 17" fill="none" stroke="#3a4db0" stroke-width="1.5" stroke-linejoin="round"><path d="M7.5 1.3L17 5.3 10.7 8.5 1.3 5.3z"/><path d="M1.3 5.3V13.3L10.7 16.8 17 13V5.3"/><path d="M1.3 9.4L10.7 12.8 17 9.2"/></svg><div class="t" style="left:159px;top:373.19px;font-size:16px;color:#3d4d8f;letter-spacing:0.36px">1-Base (A)</div><svg style="left:430px;top:365.19px" width="36" height="30" viewBox="0 0 36 30"><path d="M8.5 19.5l5-8 14.5-1.5 1 3-6 9-12.5.8z" fill="#6a2e2a"/><path d="M9 21l14-1 6-6.5" stroke="#3a1410" stroke-width="1" fill="none"/></svg><svg style="left:510px;top:374.19px" width="15" height="12" viewBox="0 0 15 12"><path d="M1 6.5l4 4 9-9.5" fill="none" stroke="#1c8a2b" stroke-width="1.7"/></svg><div class="t" style="left:619.5px;top:373.19px;font-size:16px;color:#4b5260;letter-spacing:0.2px">Subitem</div><div class="t" style="left:706px;top:373.19px;width:85px;text-align:center;font-size:16px;color:#4b5260">A</div><div class="a" style="left:55px;top:443.20px;width:736px;height:1px;background:#e2e2e2"></div><div class="a" style="left:75px;top:422.53px;width:22px;height:1px;background:#9a9a9a"></div><div class="a" style="left:109.5px;top:415.03px;width:15px;height:15px;border:1px solid #d6d8dc;border-radius:2px"></div><svg style="left:135px;top:414.03px" width="18" height="17" viewBox="0 0 18 17" fill="none" stroke="#3a4db0" stroke-width="1.5" stroke-linejoin="round"><path d="M7.5 1.3L17 5.3 10.7 8.5 1.3 5.3z"/><path d="M1.3 5.3V13.3L10.7 16.8 17 13V5.3"/><path d="M1.3 9.4L10.7 12.8 17 9.2"/></svg><div class="t" style="left:159px;top:415.53px;font-size:16px;color:#3d4d8f;letter-spacing:0.36px">4-Raiser/Lower upper arm (A)</div><svg style="left:430px;top:407.53px" width="36" height="30" viewBox="0 0 36 30"><path d="M3.5 14l9-2.5 2.5 10-9.5 2.5z" fill="#d8801c"/><path d="M11 12l20.5-4 1.5 7-20.5 4z" fill="#d07214"/><path d="M14 11l1-1.8 1.2 1.4 1-1.8 1.2 1.4 1-1.8 1.2 1.4 1-1.8 1.2 1.4 1-1.8 1.2 1.4 1-1.8 1.2 1.4M15 15.5l16-3" stroke="#5a2a0a" stroke-width="0.9" fill="none"/></svg><svg style="left:510px;top:416.53px" width="15" height="12" viewBox="0 0 15 12"><path d="M1 6.5l4 4 9-9.5" fill="none" stroke="#1c8a2b" stroke-width="1.7"/></svg><div class="t" style="left:619.5px;top:415.53px;font-size:16px;color:#4b5260;letter-spacing:0.2px">Subitem</div><div class="t" style="left:706px;top:415.53px;width:85px;text-align:center;font-size:16px;color:#4b5260">A</div><div class="a" style="left:55px;top:485.54px;width:736px;height:1px;background:#e2e2e2"></div><div class="a" style="left:75px;top:464.87px;width:22px;height:1px;background:#9a9a9a"></div><div class="a" style="left:109.5px;top:457.37px;width:15px;height:15px;border:1px solid #d6d8dc;border-radius:2px"></div><svg style="left:135px;top:456.37px" width="18" height="17" viewBox="0 0 18 17" fill="none" stroke="#3a4db0" stroke-width="1.5" stroke-linejoin="round"><path d="M7.5 1.3L17 5.3 10.7 8.5 1.3 5.3z"/><path d="M1.3 5.3V13.3L10.7 16.8 17 13V5.3"/><path d="M1.3 9.4L10.7 12.8 17 9.2"/></svg><div class="t" style="left:159px;top:457.87px;font-size:16px;color:#3d4d8f;letter-spacing:0.36px">5-Wrist roll (A)</div><svg style="left:430px;top:449.87px" width="36" height="30" viewBox="0 0 36 30"><path d="M6 8.5c.5-2.5 2.5-3.8 4.5-3 1.5.6 2.5-.5 4 .2l10.5 8c2.8 2 3.8 5 2.5 7.5-1.3 2.3-4.2 2.8-6.5 1.5L9.5 15c-2.5-1.3-4-4-3.5-6.5z" fill="#a8561a"/><path d="M21 14.5c2.5.5 4 3.5 3 6.5" stroke="#6a300a" stroke-width="0.9" fill="none"/><circle cx="10" cy="7.5" r="0.8" fill="#3a1a0a"/></svg><svg style="left:510px;top:458.87px" width="15" height="12" viewBox="0 0 15 12"><path d="M1 6.5l4 4 9-9.5" fill="none" stroke="#1c8a2b" stroke-width="1.7"/></svg><div class="t" style="left:619.5px;top:457.87px;font-size:16px;color:#4b5260;letter-spacing:0.2px">Subitem</div><div class="t" style="left:706px;top:457.87px;width:85px;text-align:center;font-size:16px;color:#4b5260">A</div><div class="a" style="left:55px;top:527.88px;width:736px;height:1px;background:#e2e2e2"></div><div class="a" style="left:75px;top:507.21px;width:22px;height:1px;background:#9a9a9a"></div><div class="a" style="left:109.5px;top:499.71px;width:15px;height:15px;border:1px solid #d6d8dc;border-radius:2px"></div><svg style="left:135px;top:498.71px" width="18" height="17" viewBox="0 0 18 17" fill="none" stroke="#3a4db0" stroke-width="1.5" stroke-linejoin="round"><path d="M7.5 1.3L17 5.3 10.7 8.5 1.3 5.3z"/><path d="M1.3 5.3V13.3L10.7 16.8 17 13V5.3"/><path d="M1.3 9.4L10.7 12.8 17 9.2"/></svg><div class="t" style="left:159px;top:500.21px;font-size:16px;color:#3d4d8f;letter-spacing:0.36px">6-Raiser/Lower (A)</div><svg style="left:430px;top:492.21px" width="36" height="30" viewBox="0 0 36 30"><rect x="5" y="5.5" width="3.5" height="16" rx="1.3" fill="#c86c18"/><path d="M7.5 10h21l-3 3 3.5 3.5H7.5z" fill="#d8801c"/><rect x="9.5" y="10.5" width="3.5" height="3.5" fill="#8a0e0e"/><path d="M7.5 16.5h21" stroke="#7a3a0a" stroke-width="0.8"/></svg><svg style="left:510px;top:501.21px" width="15" height="12" viewBox="0 0 15 12"><path d="M1 6.5l4 4 9-9.5" fill="none" stroke="#1c8a2b" stroke-width="1.7"/></svg><div class="t" style="left:619.5px;top:500.21px;font-size:16px;color:#4b5260;letter-spacing:0.2px">Subitem</div><div class="t" style="left:706px;top:500.21px;width:85px;text-align:center;font-size:16px;color:#4b5260">A</div><div class="a" style="left:55px;top:570.22px;width:736px;height:1px;background:#e2e2e2"></div><div class="a" style="left:75px;top:549.55px;width:22px;height:1px;background:#9a9a9a"></div><div class="a" style="left:109.5px;top:542.05px;width:15px;height:15px;border:1px solid #d6d8dc;border-radius:2px"></div><svg style="left:135px;top:541.05px" width="18" height="17" viewBox="0 0 18 17" fill="none" stroke="#3a4db0" stroke-width="1.5" stroke-linejoin="round"><path d="M7.5 1.3L17 5.3 10.7 8.5 1.3 5.3z"/><path d="M1.3 5.3V13.3L10.7 16.8 17 13V5.3"/><path d="M1.3 9.4L10.7 12.8 17 9.2"/></svg><div class="t" style="left:159px;top:542.55px;font-size:16px;color:#3d4d8f;letter-spacing:0.36px">7.Wrist rotator (A)</div><svg style="left:430px;top:534.55px" width="36" height="30" viewBox="0 0 36 30"><path d="M7 10h10v4H11v3.5h6v4H7z" fill="#e0882a"/><rect x="16" y="5" width="12" height="18.5" rx="3" fill="#c8701a"/><path d="M19 8h1M23 11h1M19 15h1M23 19h1M7.5 21h9" stroke="#4a2008" stroke-width="1.1"/></svg><svg style="left:510px;top:543.55px" width="15" height="12" viewBox="0 0 15 12"><path d="M1 6.5l4 4 9-9.5" fill="none" stroke="#1c8a2b" stroke-width="1.7"/></svg><div class="t" style="left:619.5px;top:542.55px;font-size:16px;color:#4b5260;letter-spacing:0.2px">Subitem</div><div class="t" style="left:706px;top:542.55px;width:85px;text-align:center;font-size:16px;color:#4b5260">A</div><div class="a" style="left:55px;top:612.56px;width:736px;height:1px;background:#e2e2e2"></div><div class="a" style="left:75px;top:591.89px;width:22px;height:1px;background:#9a9a9a"></div><div class="a" style="left:109.5px;top:584.39px;width:15px;height:15px;border:1px solid #d6d8dc;border-radius:2px"></div><svg style="left:135px;top:583.39px" width="18" height="17" viewBox="0 0 18 17" fill="none" stroke="#3a4db0" stroke-width="1.5" stroke-linejoin="round"><path d="M7.5 1.3L17 5.3 10.7 8.5 1.3 5.3z"/><path d="M1.3 5.3V13.3L10.7 16.8 17 13V5.3"/><path d="M1.3 9.4L10.7 12.8 17 9.2"/></svg><div class="t" style="left:159px;top:584.89px;font-size:16px;color:#3d4d8f;letter-spacing:0.36px">8.Gripper (A)</div><svg style="left:430px;top:576.89px" width="36" height="30" viewBox="0 0 36 30"><path d="M7 25.5c2.5-6 6-13 12.5-17 3-1.8 6.5-3 10.5-2.5-2.5.8-4.5 2.5-6 5-3 5-5.5 11-17 14.5z" fill="#6e6e8a"/><path d="M9 24c4-3 7-8 10-13" stroke="#34344a" stroke-width="0.7" fill="none"/><circle cx="15" cy="17" r="0.7" fill="#222"/><circle cx="20" cy="11.5" r="0.7" fill="#222"/></svg><svg style="left:510px;top:585.89px" width="15" height="12" viewBox="0 0 15 12"><path d="M1 6.5l4 4 9-9.5" fill="none" stroke="#1c8a2b" stroke-width="1.7"/></svg><div class="t" style="left:619.5px;top:584.89px;font-size:16px;color:#4b5260;letter-spacing:0.2px">Subitem</div><div class="t" style="left:706px;top:584.89px;width:85px;text-align:center;font-size:16px;color:#4b5260">A</div><div class="a" style="left:55px;top:654.90px;width:736px;height:1px;background:#e2e2e2"></div><div class="a" style="left:75px;top:634.23px;width:22px;height:1px;background:#9a9a9a"></div><div class="a" style="left:109.5px;top:626.73px;width:15px;height:15px;border:1px solid #d6d8dc;border-radius:2px"></div><svg style="left:135px;top:625.73px" width="18" height="17" viewBox="0 0 18 17" fill="none" stroke="#3a4db0" stroke-width="1.5" stroke-linejoin="round"><path d="M7.5 1.3L17 5.3 10.7 8.5 1.3 5.3z"/><path d="M1.3 5.3V13.3L10.7 16.8 17 13V5.3"/><path d="M1.3 9.4L10.7 12.8 17 9.2"/></svg><div class="t" style="left:159px;top:627.23px;font-size:16px;color:#3d4d8f;letter-spacing:0.36px">8.Gripper (A)</div><svg style="left:430px;top:619.23px" width="36" height="30" viewBox="0 0 36 30"><path d="M7 25.5c2.5-6 6-13 12.5-17 3-1.8 6.5-3 10.5-2.5-2.5.8-4.5 2.5-6 5-3 5-5.5 11-17 14.5z" fill="#6e6e8a"/><path d="M9 24c4-3 7-8 10-13" stroke="#34344a" stroke-width="0.7" fill="none"/><circle cx="15" cy="17" r="0.7" fill="#222"/><circle cx="20" cy="11.5" r="0.7" fill="#222"/></svg><svg style="left:510px;top:628.23px" width="15" height="12" viewBox="0 0 15 12"><path d="M1 6.5l4 4 9-9.5" fill="none" stroke="#1c8a2b" stroke-width="1.7"/></svg><div class="t" style="left:619.5px;top:627.23px;font-size:16px;color:#4b5260;letter-spacing:0.2px">Subitem</div><div class="t" style="left:706px;top:627.23px;width:85px;text-align:center;font-size:16px;color:#4b5260">A</div><div class="a" style="left:75px;top:261px;width:1px;height:373.23px;background:#9a9a9a"></div><div class="a" style="left:774px;top:578px;width:18px;height:36px;background:#8e939c;border-radius:5px 0 0 5px"></div><svg style="left:778px;top:589px" width="10" height="14" viewBox="0 0 10 14"><path d="M3 2l5 5-5 5" fill="none" stroke="#fff" stroke-width="1.5"/></svg><div class="a" style="left:56px;top:1021px;width:162px;height:7px;background:#808080"></div><div class="a" style="left:405px;top:1010px;width:36px;height:18px;background:#9ca1aa;border-radius:5px 5px 0 0"></div><svg style="left:414px;top:1013px" width="18" height="10" viewBox="0 0 18 10"><path d="M3 8.5l6-6 6 6" fill="none" stroke="#fff" stroke-width="1.8"/></svg><div class="a" style="left:793px;top:256px;width:1115px;height:1px;background:#e3e4e7"></div><svg style="left:811px;top:209px" width="19" height="19" viewBox="0 0 16 16"><g fill="none" stroke="#5b5f6e" stroke-width="1.5" stroke-linecap="round" stroke-linejoin="round"><path d="M7 2H3.5A1.5 1.5 0 0 0 2 3.5v9A1.5 1.5 0 0 0 3.5 14h9a1.5 1.5 0 0 0 1.5-1.5V9"/><path d="M10 2h4v4M14 2L8.5 7.5"/></g></svg><svg style="left:833.5px;top:218px" width="9" height="7" viewBox="0 0 9 7"><path d="M1 1.5l3.5 3.5 3.5-3.5" fill="none" stroke="#5b5f6e" stroke-width="1.9" stroke-linecap="round" stroke-linejoin="round"/></svg><div class="lb" style="left:778.5px;top:236px;color:#2b2f38;font-size:11px">Open</div><div class="a" style="left:854px;top:203px;width:1px;height:48px;background:#e0e1e4"></div><svg style="left:870.5px;top:209.5px" width="19" height="19" viewBox="0 0 16 16"><g fill="none" stroke="#5f6370" stroke-width="1.3" stroke-linecap="round" stroke-linejoin="round"><path d="M3.5 11.5l.5-2.5 6.5-6.5 2 2-6.5 6.5z"/><path d="M1.5 15h13"/></g></svg><div class="lb" style="left:835px;top:236px;color:#2b2f38;font-size:11px">Edit</div><svg style="left:906.2px;top:209.5px" width="19" height="19" viewBox="0 0 16 16"><g fill="none" stroke="#a8abb2" stroke-width="1.3" stroke-linecap="round" stroke-linejoin="round"><rect x="2" y="2" width="12" height="12.5" rx="1.5"/><path d="M5 2.5v2.5h6V2.5"/></g><circle cx="8" cy="10" r="1.5" fill="#a8abb2"/></svg><div class="lb" style="left:870.7px;top:236px;color:#a6a9b0;font-size:11px">Save</div><svg style="left:945.5px;top:209.5px" width="19" height="19" viewBox="0 0 16 16"><g fill="none" stroke="#5f6370" stroke-width="1.5" stroke-linecap="round" stroke-linejoin="round"><path d="M8 11V2M5.5 4.5L8 2l2.5 2.5"/><path d="M2 15h12M2 10h3M11 10h3"/></g><path d="M5.5 4.5L8 1.5l2.5 3z" fill="#5f6370"/></svg><div class="lb" style="left:910px;top:236px;color:#2b2f38;font-size:11px">Promote</div><svg style="left:986.9px;top:209.5px" width="19" height="19" viewBox="0 0 16 16"><g fill="none" stroke="#5f6370" stroke-width="1.5" stroke-linecap="round" stroke-linejoin="round"><path d="M8 5v9M5.5 11.5L8 14l2.5-2.5"/><path d="M2 1.5h12M2 6h3M11 6h3"/></g><path d="M5.5 11.5L8 14.5l2.5-3z" fill="#5f6370"/></svg><div class="lb" style="left:951.4px;top:236px;color:#2b2f38;font-size:11px">Demote</div><svg style="left:1026.0px;top:209.5px" width="19" height="19" viewBox="0 0 16 16"><g fill="none" stroke="#5f6370" stroke-width="1.2" stroke-linecap="round" stroke-linejoin="round"><path d="M2.5 15.5V2c2-1 4 0 5.5.5s3.5 1 5.5.5v10c-2 .5-4 0-5.5-.5s-3.5-1-5.5-.5"/><path d="M8 2.5v10M2.5 7c2-.5 4 0 5.5.5s3.5.5 5.5 0"/></g><path d="M2.5 2c2-1 4 0 5.5.5v5c-1.5-.5-3.5-1-5.5-.5z" fill="#d9dce3"/></svg><div class="lb" style="left:990.5px;top:236px;color:#2b2f38;font-size:11px">Finalize</div><svg style="left:1063.2px;top:209.5px" width="19" height="19" viewBox="0 0 16 16"><g fill="none" stroke="#5f6370" stroke-width="1.6" stroke-linecap="round" stroke-linejoin="round"><path d="M9.3 14V8.7L3.9 3.2M3.7 6.7V3h3.8M11.1 6.7l3.5-3.5M11.3 3h3.4v3.3"/></g></svg><div class="lb" style="left:1027.7px;top:236px;color:#2b2f38;font-size:11px">Revise</div><svg style="left:1100.5px;top:209.5px" width="19" height="19" viewBox="0 0 16 16"><g fill="none" stroke="#5f6370" stroke-width="1.6" stroke-linecap="round" stroke-linejoin="round"><path d="M14 8a6 6 0 1 1-2-4.5"/></g><path d="M10 1.5h4.5V6z" fill="#5f6370"/></svg><div class="lb" style="left:1065px;top:236px;color:#2b2f38;font-size:11px">Refresh</div><svg style="left:1874.5px;top:210.5px" width="15" height="15" viewBox="0 0 15 15"><g fill="none" stroke="#3a3e48" stroke-width="1.6" stroke-linecap="round" stroke-linejoin="round"><rect x="1" y="1" width="13" height="13" rx="1.5"/><path d="M5.3 1v13M9.7 1v13"/></g></svg><div class="lb" style="left:1837.5px;top:234px;color:#2b2f38;font-size:11px">Views</div><svg style="left:798px;top:265px" width="36" height="30" viewBox="0 0 36 30"><path d="M11 7.3L22.8 5.2 22.7 6.8 11.4 9.2z" fill="#3e2e1c"/><path d="M19.3 8c-1.8 2.5-4.8 4.5-4.5 7 .4 2.5 2.7 3.5 3.4 6" stroke="#c8902a" stroke-width="2.4" fill="none"/><path d="M15.5 22.3l4.5-1.8 2.5 3-1 1.5-6 .3z" fill="#4a1a18"/></svg><svg style="left:841.5px;top:271.5px" width="18" height="17" viewBox="0 0 18 17" fill="none" stroke="#3a4db0" stroke-width="1.5" stroke-linejoin="round"><path d="M7.5 1.3L17 5.3 10.7 8.5 1.3 5.3z"/><path d="M1.3 5.3V13.3L10.7 16.8 17 13V5.3"/><path d="M1.3 9.4L10.7 12.8 17 9.2"/></svg><div class="t" style="left:865px;top:272.3px;font-size:15.8px;color:#40599f;letter-spacing:0.42px">Multi-Axis Robot (A)</div><svg style="left:1881px;top:273px" width="14" height="10" viewBox="0 0 14 10"><path d="M1.5 8.5l5.5-6 5.5 6" fill="none" stroke="#111" stroke-width="1.8"/></svg><div class="a" style="left:793px;top:301px;width:1115px;height:49px;background:#f3f4f6"></div><div class="a" style="left:793px;top:349.5px;width:1115px;height:1.5px;background:#d9dde6"></div><div class="a" style="left:1777px;top:312.5px;width:107px;height:27px;background:#fff;border-radius:4px"></div><div class="a" style="left:1777px;top:347.5px;width:107px;height:3px;background:#1d3461"></div><svg style="left:829.5px;top:319px" width="14" height="14" viewBox="0 0 14 14"><g fill="none" stroke="#676b74" stroke-width="1.4" stroke-linecap="round" stroke-linejoin="round"><circle cx="7" cy="7" r="6"/><path d="M7 6v4.5"/></g><circle cx="7" cy="3.8" r="0.9" fill="#676b74"/></svg><div class="t" style="left:848.5px;top:319px;font-size:14px;font-weight:bold;color:#676b74;letter-spacing:-0.3px">Information</div><svg style="left:992px;top:319px" width="14" height="14" viewBox="0 0 14 14"><g fill="none" stroke="#676b74" stroke-width="1.4" stroke-linecap="round" stroke-linejoin="round"><path d="M6 4.5H4.5a2.5 2.5 0 0 0 0 5H6M9 4.5h1.5a2.5 2.5 0 0 1 0 5H9M5 7h5"/></g></svg><div class="t" style="left:1017.5px;top:319px;font-size:14px;font-weight:bold;color:#676b74;letter-spacing:-0.3px">Relations</div><svg style="left:1146px;top:319px" width="14" height="14" viewBox="0 0 14 14"><g fill="none" stroke="#676b74" stroke-width="1.4" stroke-linecap="round" stroke-linejoin="round"><path d="M4.2 2.3A5.8 5.8 0 0 1 12.6 5.5M12.6 8.5A5.8 5.8 0 0 1 4 12M1.6 9.3A5.8 5.8 0 0 1 2.2 3.6"/><path d="M11 5.2l1.8.6.6-1.8M5.5 12.6l-1.7-.8-.5 1.8"/></g></svg><div class="t" style="left:1172px;top:319px;font-size:14px;font-weight:bold;color:#676b74;letter-spacing:-0.3px">Lifecycle</div><svg style="left:1306px;top:319px" width="14" height="14" viewBox="0 0 14 14"><g fill="none" stroke="#676b74" stroke-width="1.3" stroke-linecap="round" stroke-linejoin="round"><path d="M2.5 5a5.5 5.5 0 1 1-.5 3"/><path d="M1.5 2v3h3M7 4.5V7.5l2 1.5"/></g></svg><div class="t" style="left:1330.5px;top:319px;font-size:14px;font-weight:bold;color:#676b74;letter-spacing:-0.3px">History</div><svg style="left:1453px;top:319px" width="14" height="14" viewBox="0 0 14 14"><g fill="none" stroke="#676b74" stroke-width="1.2" stroke-linecap="round" stroke-linejoin="round"><circle cx="5" cy="4" r="2.3"/><path d="M1 13c0-3 1.8-4.5 4-4.5s4 1.5 4 4.5"/><circle cx="10.5" cy="4.5" r="1.8"/><path d="M10.5 8.5c2 0 3.5 1.3 3.5 4"/></g></svg><div class="t" style="left:1478px;top:319px;font-size:14px;font-weight:bold;color:#676b74;letter-spacing:-0.3px">Collaboration</div><svg style="left:1639px;top:319px" width="14" height="14" viewBox="0 0 14 14"><g fill="none" stroke="#676b74" stroke-width="1" stroke-linecap="round" stroke-linejoin="round"><rect x="1" y="1.5" width="12" height="11" rx="1"/><path d="M3.5 7c2-2.5 5-2.5 7 0-2 2.5-5 2.5-7 0z"/></g><circle cx="7" cy="7" r="0.9" fill="#676b74"/></svg><div class="t" style="left:1663px;top:319px;font-size:14px;font-weight:bold;color:#676b74;letter-spacing:-0.3px">Preview</div><svg style="left:1787.5px;top:319px" width="14" height="14" viewBox="0 0 14 14"><g fill="none" stroke="#1d3461" stroke-width="1.3" stroke-linecap="round" stroke-linejoin="round"><path d="M2 1.5h6.5L12 5v7.5H2z"/><path d="M5 1.5v3.5H2"/></g></svg><div class="t" style="left:1813px;top:319px;font-size:14px;font-weight:bold;color:#1d3461;letter-spacing:-0.3px">Summary</div><div class="a" style="left:797px;top:356.5px;width:983px;height:39px;border:1px solid #e2e4e8;border-radius:6px;background:#fff"></div><div class="t" style="left:808px;top:369px;font-size:15.3px;color:#222">Item Summary</div><svg style="left:1754px;top:373px" width="11" height="6" viewBox="0 0 11 6"><path d="M0.5 0.5h10L5.5 5.5z" fill="#222"/></svg><div class="a" style="left:1792.5px;top:359px;width:113.5px;height:34px;background:#143474;border-radius:8px"></div><svg style="left:1818px;top:367px" width="18" height="18" viewBox="0 0 18 18" fill="none" stroke="#fff" stroke-width="1.7" stroke-linejoin="round"><path d="M4.5 6V1.5h9V6"/><rect x="1.5" y="6" width="15" height="7" rx="1.5"/><rect x="4.5" y="10.5" width="9" height="6" fill="#143474"/></svg><div class="t" style="left:1846px;top:367.8px;font-size:15.5px;font-weight:bold;color:#fff">Print</div><div class="a" style="left:793px;top:400px;width:1115px;height:1px;background:#e6e7ea"></div><div class="t" style="left:815.5px;top:428px;font-size:22.5px;font-weight:bold;color:#0a0a0a">Summary Report: Multi-Axis Robot</div><div class="t" style="left:815.5px;top:477.1px;font-size:18px;font-weight:bold;color:#0a0a0a">Attributes</div><div class="a" style="left:815.5px;top:503.5px;width:1048.5px;height:2px;background:#111"></div><div class="t" style="left:822.5px;top:523.5px;font-size:14.6px;font-weight:bold;color:#0a0a0a">Name:</div><div class="t" style="left:993.5px;top:523.5px;font-size:14.6px;color:#111">Multi-Axis Robot</div><div class="a" style="left:815.5px;top:547.0px;width:512px;height:1px;background:#e9e9e9"></div><div class="t" style="left:1359px;top:523.5px;font-size:14.6px;font-weight:bold;color:#0a0a0a">Revision:</div><div class="t" style="left:1529.5px;top:523.5px;font-size:14.6px;color:#111">A</div><div class="a" style="left:1352px;top:547.0px;width:512px;height:1px;background:#e9e9e9"></div><div class="t" style="left:822.5px;top:554.6px;font-size:14.6px;font-weight:bold;color:#0a0a0a">State:</div><div class="t" style="left:993.5px;top:554.6px;font-size:14.6px;color:#111">Draft</div><div class="a" style="left:815.5px;top:578.1px;width:512px;height:1px;background:#e9e9e9"></div><div class="t" style="left:1359px;top:554.6px;font-size:14.6px;font-weight:bold;color:#0a0a0a">Type:</div><div class="t" style="left:1529.5px;top:554.6px;font-size:14.6px;color:#111">Item</div><div class="a" style="left:1352px;top:578.1px;width:512px;height:1px;background:#e9e9e9"></div><div class="t" style="left:822.5px;top:585.7px;font-size:14.6px;font-weight:bold;color:#0a0a0a">Owner:</div><div class="t" style="left:993.5px;top:585.7px;font-size:14.6px;color:#111">plm tester</div><div class="a" style="left:815.5px;top:609.2px;width:512px;height:1px;background:#e9e9e9"></div><div class="t" style="left:1359px;top:585.7px;font-size:14.6px;font-weight:bold;color:#0a0a0a">Creator:</div><div class="t" style="left:1529.5px;top:585.7px;font-size:14.6px;color:#111">plm tester</div><div class="a" style="left:1352px;top:609.2px;width:512px;height:1px;background:#e9e9e9"></div><div class="t" style="left:822.5px;top:616.8px;font-size:14.6px;font-weight:bold;color:#0a0a0a">Description:</div><div class="t" style="left:993.5px;top:616.8px;font-size:14.6px;color:#111">Multi Axis Robot</div><div class="a" style="left:815.5px;top:640.3px;width:512px;height:1px;background:#e9e9e9"></div><div class="t" style="left:1359px;top:616.8px;font-size:14.6px;font-weight:bold;color:#0a0a0a">Workspace:</div><div class="t" style="left:1529.5px;top:616.8px;font-size:14.6px;color:#111">Default</div><div class="a" style="left:1352px;top:640.3px;width:512px;height:1px;background:#e9e9e9"></div><div class="t" style="left:822.5px;top:647.9px;font-size:14.6px;font-weight:bold;color:#0a0a0a">Created At:</div><div class="t" style="left:993.5px;top:647.9px;font-size:14.6px;color:#111">2025-12-08 10:54:49</div><div class="a" style="left:815.5px;top:671.4px;width:512px;height:1px;background:#e9e9e9"></div><div class="t" style="left:1359px;top:647.9px;font-size:14.6px;font-weight:bold;color:#0a0a0a">Updated At:</div><div class="t" style="left:1529.5px;top:647.9px;font-size:14.6px;color:#111">2025-12-09 08:00:09</div><div class="a" style="left:1352px;top:671.4px;width:512px;height:1px;background:#e9e9e9"></div><div class="t" style="left:815.5px;top:700.1px;font-size:18px;font-weight:bold;color:#0a0a0a">Lifecycle</div><div class="a" style="left:815.5px;top:726.5px;width:1048.5px;height:2px;background:#111"></div><div class="t" style="left:822.5px;top:747.5px;font-size:14.6px;font-weight:bold;color:#0a0a0a">Lifecycle:</div><div class="t" style="left:993.5px;top:747.5px;font-size:14.6px;color:#111">Item Default</div><div class="a" style="left:815.5px;top:771.0px;width:512px;height:1px;background:#e9e9e9"></div><div class="t" style="left:1359px;top:747.5px;font-size:14.6px;font-weight:bold;color:#0a0a0a">Is Final:</div><div class="t" style="left:1529.5px;top:747.5px;font-size:14.6px;color:#111">False</div><div class="a" style="left:1352px;top:771.0px;width:512px;height:1px;background:#e9e9e9"></div><div class="t" style="left:822.5px;top:778.5px;font-size:14.6px;font-weight:bold;color:#0a0a0a">State:</div><div class="t" style="left:993.5px;top:778.5px;font-size:14.6px;color:#111">Draft</div><div class="a" style="left:815.5px;top:802.0px;width:512px;height:1px;background:#e9e9e9"></div><div class="t" style="left:1359px;top:778.5px;font-size:14.6px;font-weight:bold;color:#0a0a0a">Finalized at:</div><div class="t" style="left:1529.5px;top:778.5px;font-size:14.6px;color:#111">None</div><div class="a" style="left:1352px;top:802.0px;width:512px;height:1px;background:#e9e9e9"></div><div class="t" style="left:815.5px;top:829.6px;font-size:18px;font-weight:bold;color:#0a0a0a">Item Metadata</div><div class="a" style="left:815.5px;top:857.0px;width:1048.5px;height:2px;background:#111"></div><div class="t" style="left:822.5px;top:877.0px;font-size:14.6px;font-weight:bold;color:#0a0a0a">Item ID:</div><div class="t" style="left:993.5px;top:877.0px;font-size:14.6px;color:#111">ITR-21371</div><div class="a" style="left:815.5px;top:900.5px;width:512px;height:1px;background:#e9e9e9"></div><div class="t" style="left:1359px;top:877.0px;font-size:14.6px;font-weight:bold;color:#0a0a0a">Material:</div><div class="t" style="left:1529.5px;top:877.0px;font-size:14.6px;color:#111">P20 Steel</div><div class="a" style="left:1352px;top:900.5px;width:512px;height:1px;background:#e9e9e9"></div><div class="t" style="left:822.5px;top:908.2px;font-size:14.6px;font-weight:bold;color:#0a0a0a">Item Type:</div><div class="t" style="left:993.5px;top:908.2px;font-size:14.6px;color:#111">Mechanical</div><div class="a" style="left:815.5px;top:931.7px;width:512px;height:1px;background:#e9e9e9"></div><div class="t" style="left:1359px;top:908.2px;font-size:14.6px;font-weight:bold;color:#0a0a0a">Unit of Measure:</div><div class="t" style="left:1529.5px;top:908.2px;font-size:14.6px;color:#111">Quantity</div><div class="a" style="left:1352px;top:931.7px;width:512px;height:1px;background:#e9e9e9"></div><div class="t" style="left:822.5px;top:939.4px;font-size:14.6px;font-weight:bold;color:#0a0a0a">Make Buy:</div><div class="t" style="left:993.5px;top:939.4px;font-size:14.6px;color:#111">Buy</div><div class="a" style="left:815.5px;top:962.9px;width:512px;height:1px;background:#e9e9e9"></div><div class="t" style="left:1359px;top:939.4px;font-size:14.6px;font-weight:bold;color:#0a0a0a">Maturity:</div><div class="t" style="left:1529.5px;top:939.4px;font-size:14.6px;color:#111">Prototype</div><div class="a" style="left:1352px;top:962.9px;width:512px;height:1px;background:#e9e9e9"></div><div class="t" style="left:815.5px;top:991.1px;font-size:18px;font-weight:bold;color:#0a0a0a">Structure Information</div><div class="a" style="left:815.5px;top:1017.5px;width:1048.5px;height:2px;background:#111"></div><div class="a" style="left:1887px;top:402px;width:20px;height:624px;background:#fafafa"></div><svg style="left:1889px;top:407.5px" width="12" height="9" viewBox="0 0 12 9"><path d="M0.5 8.5L6 0.5 11.5 8.5z" fill="#8f8f8f" stroke="#8f8f8f" stroke-width="0.8" stroke-linejoin="round"/></svg><div class="a" style="left:1890px;top:425px;width:10.5px;height:148px;background:#8a8a8a;border-radius:5px"></div><svg style="left:1889px;top:1015px" width="12" height="9" viewBox="0 0 12 9"><path d="M0.5 0.5h11L6 8.5z" fill="#8f8f8f" stroke="#8f8f8f" stroke-width="0.8" stroke-linejoin="round"/></svg><div class="a" style="left:1913px;top:92px;width:4px;height:941px;background:#9b9b9b"></div></body></html>
